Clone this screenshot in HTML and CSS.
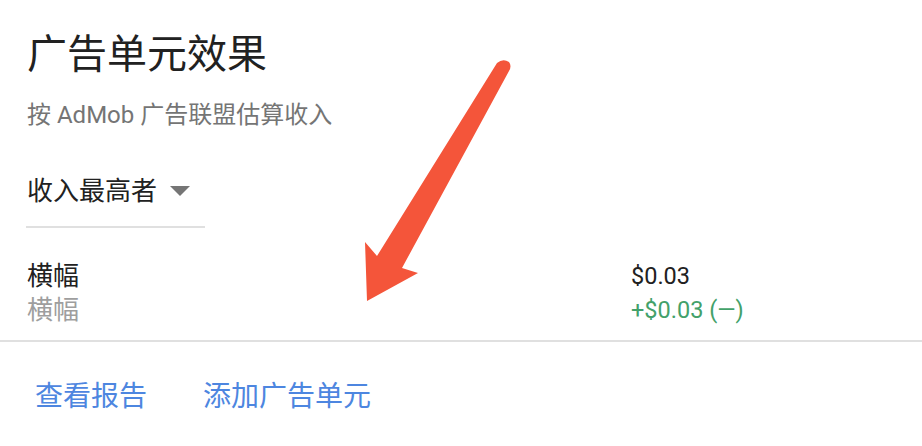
FILE: index.html
```html
<!DOCTYPE html>
<html lang="zh-CN">
<head>
    <meta charset="UTF-8">
    <meta name="viewport" content="width=device-width, initial-scale=1.0">
    <title>广告单元效果</title>
    <link rel="stylesheet" href="styles.css">
</head>
<body>
    <div class="card">
        <div class="card-head">
            <h1 class="title">广告单元效果</h1>
            <p class="subtitle">按 AdMob 广告联盟估算收入</p>
            <div class="select">
                <span>收入最高者</span>
                <span class="caret"></span>
            </div>
        </div>

        <div class="unit-row">
            <div class="unit-name">
                <div class="name">横幅</div>
                <div class="type">横幅</div>
            </div>
            <div class="unit-value">
                <div class="amount">$0.03</div>
                <div class="delta">+$0.03 (—)</div>
            </div>
        </div>

        <div class="actions">
            <a href="#">查看报告</a>
            <a href="#">添加广告单元</a>
        </div>

        <!-- annotation arrow drawn over the card -->
        <svg class="arrow" width="922" height="446" viewBox="0 0 922 446">
            <path d="M497 63 Q503 58 509 62 Q512 66 509 71 L402 268 L418 273 L367 301 L365 242 L377 256 Z" fill="#f4553a"/>
        </svg>
    </div>
</body>
</html>
```

FILE: styles.css
```css
/* Page */
body, html {
    margin: 0;
    padding: 0;
    background: #fff;
    font-family: 'Roboto', 'Noto Sans CJK SC', sans-serif;
}

.card {
    position: relative;
    width: 922px;
    height: 446px;
    overflow: hidden;
    background: #fff;
}

/* Header */
.card-head {
    display: flex;
    flex-direction: column;
    align-items: flex-start;
    padding: 31px 27px 0;
}

.title {
    margin: 0;
    font-size: 40px;
    line-height: 48px;
    font-weight: normal;
    color: #212121;
}

.subtitle {
    margin: 21px 0 0;
    font-size: 24px;
    line-height: 30px;
    color: #757575;
}

.select {
    display: flex;
    align-items: center;
    width: 178px;
    margin: 44px 0 0 -1px;
    padding: 0 0 18px 1px;
    border-bottom: 2px solid #e0e0e0;
    font-size: 26px;
    line-height: 34px;
    color: #212121;
}

.caret {
    width: 0;
    height: 0;
    margin-left: 13px;
    border-left: 10px solid transparent;
    border-right: 10px solid transparent;
    border-top: 10px solid #757575;
}

/* Ad unit row */
.unit-row {
    display: grid;
    grid-template-columns: 1fr 264px;
    margin-top: 31px;
    padding: 0 27px 13px;
    border-bottom: 2px solid #e0e0e0;
    line-height: 34px;
}

.unit-name {
    font-size: 26px;
}

.name {
    color: #212121;
}

.type {
    color: #9e9e9e;
}

.unit-value {
    font-size: 23.5px;
}

.amount {
    color: #212121;
}

.delta {
    color: #43a16a;
}

/* Footer links */
.actions {
    display: flex;
    gap: 56px;
    padding: 35px 35px 0;
}

.actions a {
    font-size: 28px;
    line-height: 40px;
    color: #4d86e0;
    text-decoration: none;
}

.arrow {
    position: absolute;
    top: 0;
    left: 0;
    pointer-events: none;
}
```
